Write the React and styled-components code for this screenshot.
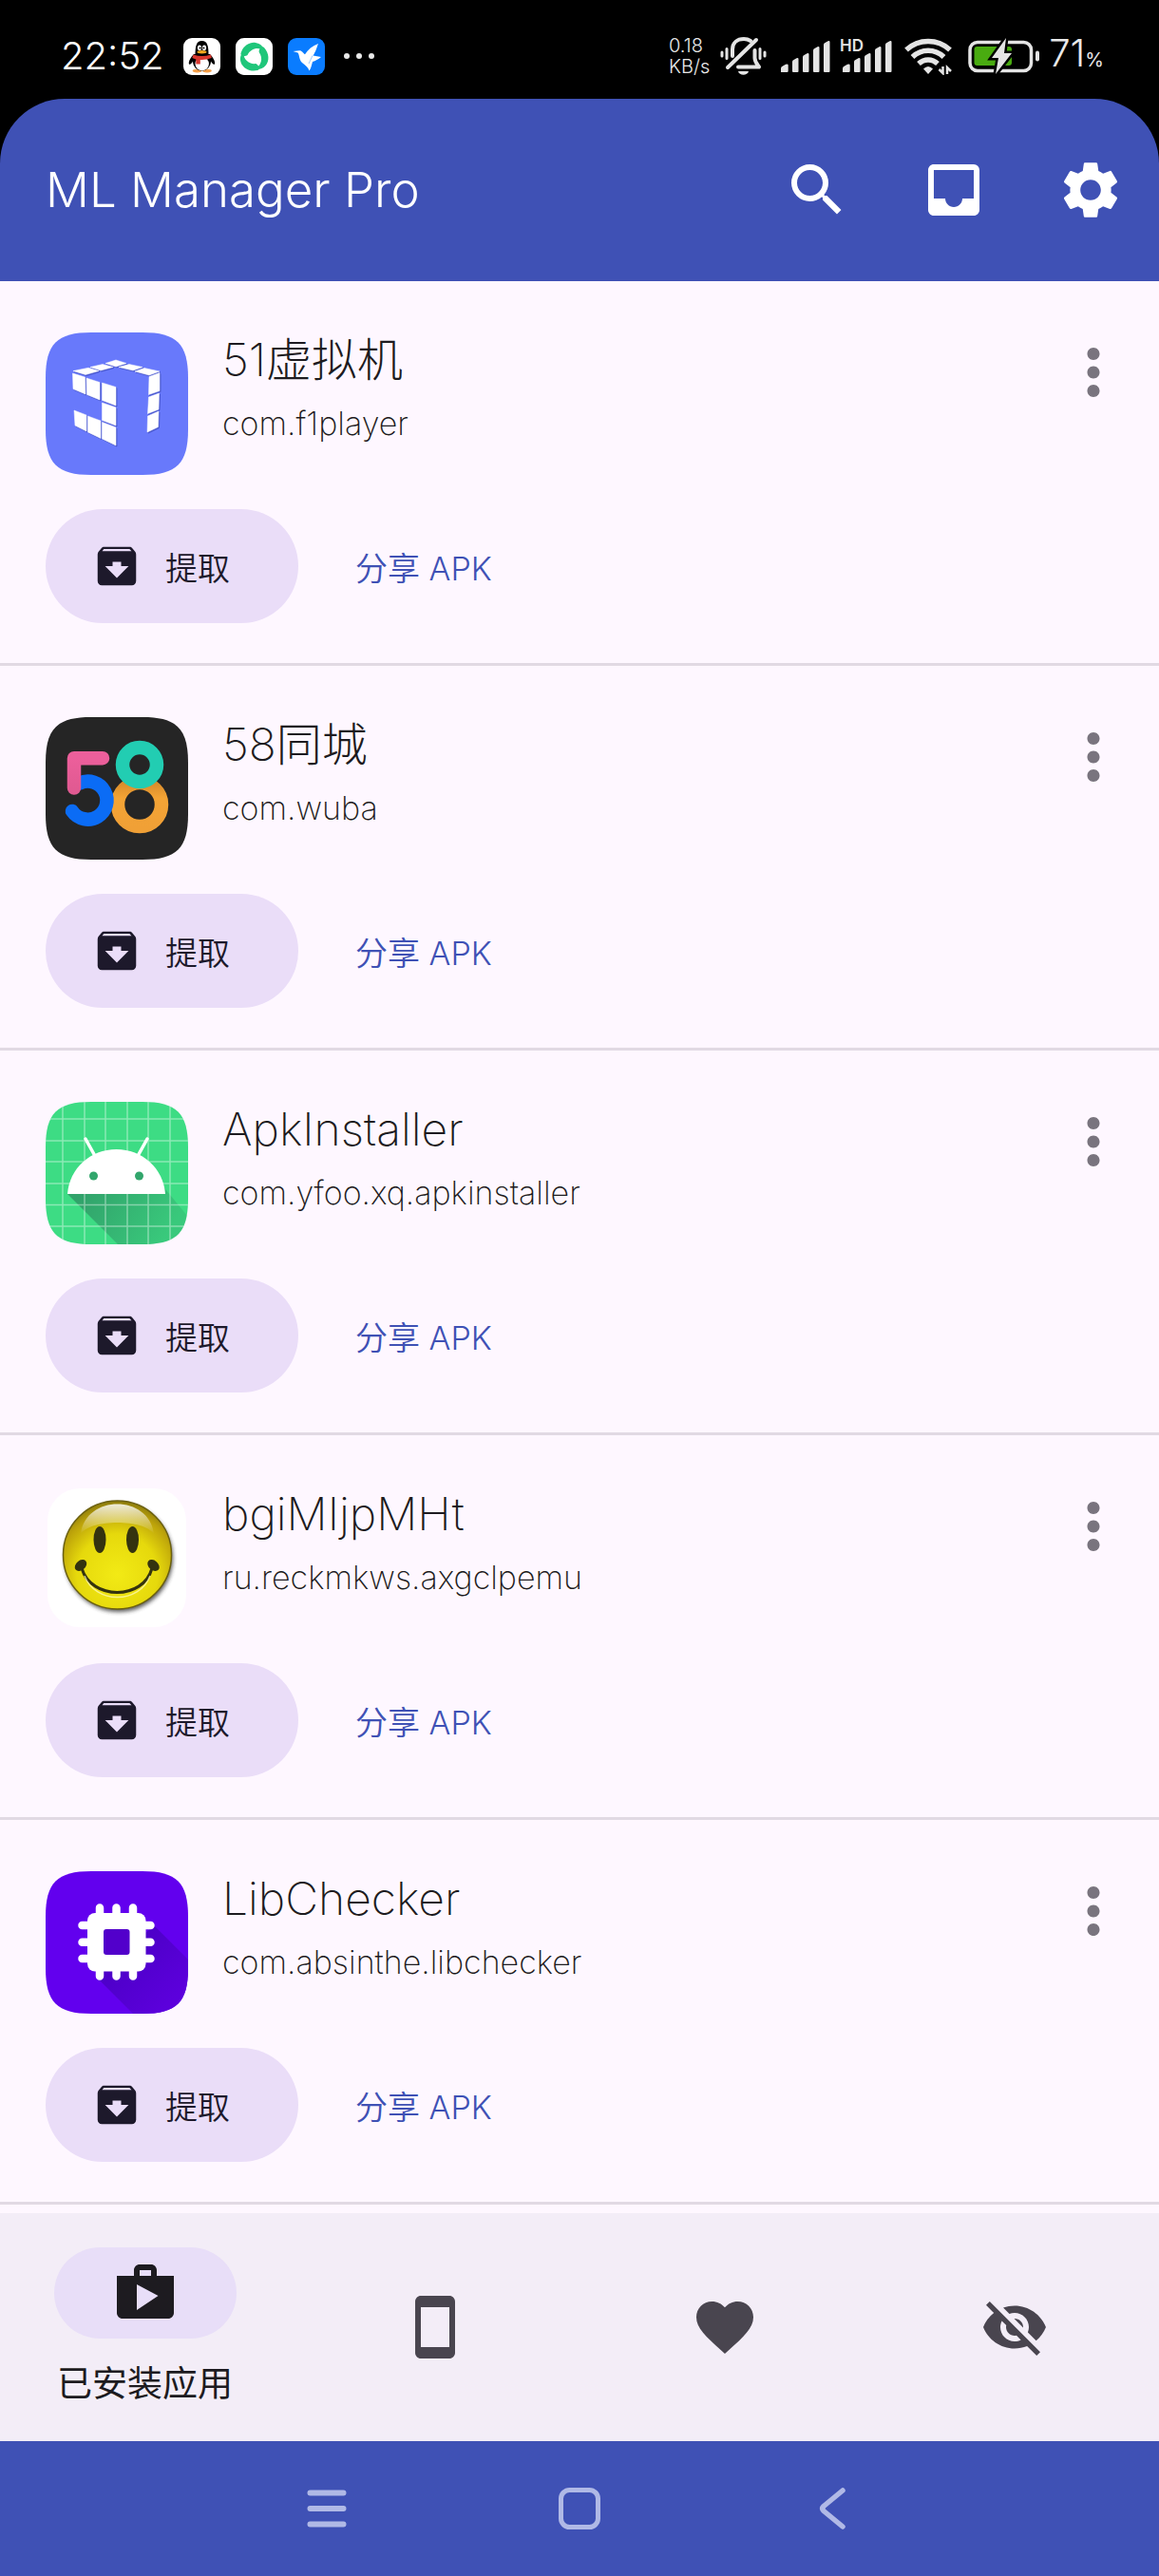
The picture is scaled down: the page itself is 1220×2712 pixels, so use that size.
import React from 'react';
import styled, { createGlobalStyle } from 'styled-components';
import {
    MdSearch, MdInbox, MdSettings, MdMoreVert, MdArchive,
    MdShop, MdStayCurrentPortrait, MdFavorite, MdVisibilityOff
} from 'react-icons/md';

const GlobalStyle = createGlobalStyle`
    * {
        box-sizing: border-box;
    }
    body {
        margin: 0;
        background: #000;
        font-family: "Inter", "Noto Sans CJK SC", sans-serif;
    }
    button {
        border: 0;
        padding: 0;
        margin: 0;
        background: none;
        font: inherit;
        color: inherit;
        cursor: pointer;
    }
    svg {
        display: block;
        flex: none;
    }
`

const Screen = styled.div`
    min-height: 100vh;
    display: flex;
    flex-direction: column;
`

/* ---------- status bar ---------- */

const StatusBar = styled.div`
    height: 104px;
    padding: 14px 58px 0 64px;
    display: flex;
    justify-content: space-between;
    align-items: center;
    color: #e8e8e8;
`

const StatusGroup = styled.div`
    display: flex;
    align-items: center;
    gap: ${props => props.$gap};
`

const Clock = styled.time`
    font-size: 40px;
    font-weight: 300;
    line-height: 48px;
    margin-right: 4px;
    color: #fff;
`

const NetSpeed = styled.div`
    display: flex;
    flex-direction: column;
    font-size: 20px;
    font-weight: 300;
    line-height: 22px;
`

const Battery = styled.div`
    font-size: 40px;
    font-weight: 300;
    line-height: 48px;
    small {
        font-size: 20px;
        font-weight: 400;
    }
`

/* ---------- app bar ---------- */

const AppBar = styled.header`
    height: 192px;
    padding: 0 36px 0 48px;
    display: flex;
    align-items: center;
    justify-content: space-between;
    border-radius: 68px 68px 0 0;
    background: #3f51b5;
    color: #fff;
    h1 {
        margin: 0;
        font-size: 51px;
        font-weight: 300;
        line-height: 60px;
    }
`

const Actions = styled.div`
    display: flex;
    gap: 72px;
`

/* ---------- list ---------- */

const AppList = styled.ul`
    flex: 1;
    margin: 0;
    padding: 0 0 9px;
    list-style: none;
    background: #fef7ff;
    color: #1d1b20;
`

const AppItem = styled.li`
    padding: 54px 30px 42px 48px;
    border-bottom: 3px solid #e1d9e3;
`

const ItemHead = styled.div`
    display: flex;
    align-items: flex-start;
    gap: 36px;
    margin-bottom: 36px;
`

const ItemText = styled.div`
    flex: 1;
    min-width: 0;
    font-weight: 200;
    h2 {
        margin: 0 0 12px;
        font-size: 48px;
        font-weight: 200;
        line-height: 58px;
    }
    p {
        margin: 0;
        font-size: 34px;
        line-height: 52px;
    }
`

const MoreButton = styled.button`
    height: 84px;
    color: #79747e;
`

const ItemActions = styled.div`
    display: flex;
    gap: 24px;
`

const ActionButton = styled.button`
    display: flex;
    align-items: center;
    gap: 24px;
    height: 120px;
    border-radius: 60px;
    padding: ${props => props.$filled ? '0 72px 0 48px' : '0 36px'};
    background: ${props => props.$filled ? '#eaddf8' : 'none'};
    color: ${props => props.$filled ? '#1d192b' : '#3f51b5'};
    font-size: 34px;
    font-weight: 350;
`

/* ---------- bottom bars ---------- */

const BottomNav = styled.nav`
    height: 240px;
    display: grid;
    grid-template-columns: repeat(4, 1fr);
    background: #f3edf7;
`

const NavItem = styled.button`
    display: flex;
    flex-direction: column;
    align-items: center;
    justify-content: center;
    gap: 24px;
    color: ${props => props.$active ? '#1d1b20' : '#49454f'};
    font-size: 37px;
    line-height: 48px;
`

const NavPill = styled.span`
    display: grid;
    place-items: center;
    width: 192px;
    height: 96px;
    border-radius: 48px;
    background: ${props => props.$active ? '#e8def8' : 'none'};
`

const SystemNav = styled.nav`
    height: 142px;
    display: flex;
    justify-content: center;
    background: #3f51b5;
`

const SystemButton = styled.button`
    width: 266px;
    display: grid;
    place-items: center;
`

/* ---------- status icons ---------- */

const PenguinBadge = () => (
    <svg width="39" height="39" viewBox="0 0 39 39">
        <rect width="39" height="39" rx="9" fill="#fff" />
        <ellipse cx="14.5" cy="34.6" rx="4.8" ry="1.8" fill="#f5a04a" />
        <ellipse cx="25" cy="34.6" rx="4.8" ry="1.8" fill="#f5a04a" />
        <path d="M11 17C8 20 5 25 6 27.500c1 1 3-1 4-3c0 5 4 10 9.500 10s9.500-5 9.500-10c1 2 3 4 4 3c1-2.500-2-7.500-5-10.500z" fill="#000" />
        <path d="M12.500 18c0-9 1-15 7-15s7 6 7 15z" fill="#000" />
        <ellipse cx="19.700" cy="27.200" rx="7.200" ry="7" fill="#fff" />
        <ellipse cx="17" cy="10.300" rx="2.100" ry="2.900" fill="#fff" />
        <ellipse cx="22" cy="10.300" rx="2.100" ry="2.900" fill="#fff" />
        <circle cx="17.700" cy="10.600" r="1" />
        <circle cx="21.400" cy="10.600" r="1" />
        <ellipse cx="19.500" cy="14.800" rx="5" ry="1.700" fill="#f3a71d" />
        <path d="M10.500 17.500q9 3 18.500 0l.8 3.500q-7 2.500-12 2v4.500h-4.500v-5l-4-1.500z" fill="#d9382f" />
    </svg>
)

const SwirlBadge = () => {
    const blade = 'M5.500 16C8 8 15 4 21 5C26 5.800 29 9 30.500 13.500C24 8.500 15.500 11 12.500 18C10 20 5 19.500 5.500 16z'
    return (
        <svg width="39" height="39" viewBox="0 0 39 39">
            <rect width="39" height="39" rx="9" fill="#fff" />
            <g fill="#1fc67a">
                <path d={blade} />
                <path d={blade} transform="rotate(120 19.500 20)" />
                <path d={blade} transform="rotate(240 19.500 20)" />
            </g>
        </svg>
    )
}

const BirdBadge = () => (
    <svg width="39" height="39" viewBox="0 0 39 39">
        <rect width="39" height="39" rx="9" fill="#0a7cff" />
        <path d="M5.500 14L12 13.300C15 13.200 16 16 18 17.300C21 12 26 8.500 32 6C30 11 29.500 14 26.500 18.500L35 20C32 22.500 29 24 26 25C25 28 24.500 32 22.500 34.500C21.500 31 18.500 28.500 15 26C11.500 22.500 12.500 18 10.500 15.500z" fill="#fff" />
        <path d="M26 18.500L22 27" stroke="#9ccbff" strokeWidth="1" />
    </svg>
)

const MoreDots = () => (
    <svg width="36" height="10" viewBox="0 0 36 10" fill="#e8e8e8">
        <circle cx="7" cy="5" r="3" />
        <circle cx="20" cy="5" r="3" />
        <circle cx="33" cy="5" r="3" />
    </svg>
)

const MutedBell = () => (
    <svg width="54" height="40" viewBox="0 0 54 40" fill="none" stroke="#e4e4e4" strokeWidth="4" strokeLinecap="round">
        <path d="M14 20V13C14 6 19 2 26 2c3 0 5 .7 7 2" />
        <path d="M37.500 14v8c0 4 2 6 4.500 9.500H20" strokeLinejoin="round" />
        <path d="M39 3L9 32" />
        <path d="M20 36h11c-1 5-10 5-11 0z" fill="#e4e4e4" stroke="none" />
        <path d="M3 16v4M8 12.500v10M43 12.500v10M48 16v4" strokeWidth="3" />
    </svg>
)

const Signal = ({ hd }) => (
    <svg width={hd ? 56 : 53} height="40" viewBox={hd ? '-2 0 56 40' : '0 0 53 40'} fill="#e4e4e4">
        <path d="M1 37v-4q0-2 2-2.500l3-1.700q2.700-1 2.700 1v6q0 1.200-1.200 1.200z" />
        {[[13, 22], [24, 17], [35, 10], [46, 4]].map(([x, y]) => (
            <path key={x} d={`M${x} 36V${y + 4}q0-1.500 1.500-2l3-1.700q2-.8 2 1V36q0 1-1 1h-4.500q-1 0-1-1z`} />
        ))}
        {hd && <text x="-2" y="15" fontSize="17" fontWeight="600" stroke="#000" strokeWidth="3" paintOrder="stroke">HD</text>}
    </svg>
)

const Wifi = () => (
    <svg width="57" height="40" viewBox="0 0 57 40" fill="none" stroke="#e4e4e4" strokeWidth="5.500">
        <path d="M4 13.500C17 1.500 37 1.500 50 13.500" />
        <path d="M10.500 21C20 12 34 12 43.500 21" />
        <path d="M17 28C23 22.500 31 22.500 37 28" />
        <path d="M27 39l-5-5.500q5-5 10 0z" fill="#e4e4e4" stroke="none" />
        <path d="M37.500 31h14v9h-14z" fill="#000" stroke="none" />
        <path d="M42.500 31v7l-4-4M47 39v-7l4 4" strokeWidth="2.500" />
    </svg>
)

const ChargingBattery = () => (
    <svg width="77" height="40" viewBox="0 0 77 40">
        <rect x="4" y="5.500" width="64.500" height="30" rx="8" fill="none" stroke="#e4e4e4" strokeWidth="3.500" />
        <rect x="73" y="14.500" width="4" height="11" rx="2" fill="#e4e4e4" />
        <rect x="8.500" y="10" width="39.500" height="20" rx="3" fill="#49ab10" />
        <path d="M42 1L27 22h7l-3 17L48 17h-8z" fill="#e4e4e4" stroke="#000" strokeWidth="5" paintOrder="stroke" />
    </svg>
)

/* ---------- app logos ---------- */

// rounded tile outline shared by all launcher icons
const TILE = 'M0 48C0 12 12 0 48 0h54c36 0 48 12 48 48v54c0 36-12 48-48 48H48C12 150 0 138 0 102z'

const cubeFaces = [
    '74,29 85,32.500 74,36 63,32.500', '47,36.500 60,33.500 71,36.500 58,40', '29,40.500 45,37.300 56,40.500 42,44.500',
    '77,36.500 88,33.500 102,36.500 92,40', '94,41 104,37.500 120,41 109,45',
    '28.500,43 41.500,47 42,65 29,59.500', '43,48 57,52.500 57,71 43.500,65.500', '59.500,53 74,57.500 74,77 59.500,71.500',
    '59.500,74 74,79 74,98 59.500,92.500', '30,82 43,87 43,104 31,98', '44.500,88 58,93 58,111.500 44.500,105',
    '59.500,94.500 74,100 74,119 59.500,112',
    '109,46.500 120,42.500 120,61.500 108.500,65.500', '108.500,68 119.500,64 119,81 107.500,85.500', '107.500,88 119,83 118.500,99.500 107,105'
]

const CubeLogo = () => (
    <svg width="150" height="150" viewBox="0 0 150 150">
        <path d={TILE} fill="#6879fb" />
        <g fill="#4b5ad0" stroke="#4b5ad0" transform="translate(1 1)">
            {cubeFaces.map(f => <polygon key={f} points={f} />)}
        </g>
        <g fill="#fff" stroke="#fff" strokeWidth=".5" strokeLinejoin="round">
            {cubeFaces.map(f => <polygon key={f} points={f} />)}
        </g>
    </svg>
)

const WubaLogo = () => (
    <svg width="150" height="150" viewBox="0 0 150 150">
        <defs>
            <linearGradient id="wubaOrange" x1="0" y1="0" x2="0" y2="1">
                <stop offset="0" stopColor="#d88c2b" />
                <stop offset=".35" stopColor="#f4a435" />
                <stop offset="1" stopColor="#f0a036" />
            </linearGradient>
            <linearGradient id="wubaPink" x1="0" y1="0" x2="0" y2="1">
                <stop offset="0" stopColor="#ec5f9b" />
                <stop offset="1" stopColor="#e15a92" />
            </linearGradient>
        </defs>
        <path d={TILE} fill="#252525" />
        <g fill="none" strokeWidth="14.500" strokeLinecap="round" strokeLinejoin="round">
            <circle cx="99" cy="92" r="23" stroke="url(#wubaOrange)" />
            <circle cx="99" cy="50" r="18" stroke="#22cdb2" />
            <path d="M36 69.500A20 20 0 1 1 28 99" stroke="#0b6cf5" />
            <path d="M60 43.200H30V74.500" stroke="url(#wubaPink)" />
        </g>
    </svg>
)

const AndroidLogo = () => (
    <svg width="150" height="150" viewBox="0 0 150 150">
        <defs>
            <clipPath id="androidTile"><path d={TILE} /></clipPath>
            <linearGradient id="androidShade" x1="40" y1="95" x2="120" y2="150" gradientUnits="userSpaceOnUse">
                <stop offset="0" stopColor="#2d8f62" stopOpacity=".75" />
                <stop offset="1" stopColor="#2d8f62" stopOpacity=".25" />
            </linearGradient>
        </defs>
        <g clipPath="url(#androidTile)">
            <rect width="150" height="150" fill="#3ddc84" />
            <path d="M23 97L76 150H150V121L108 70z" fill="url(#androidShade)" />
            <path d="M18 0v150M41 0v150M63 0v150M86 0v150M108 0v150M131 0v150M0 18h150M0 41h150M0 63h150M0 86h150M0 108.500h150M0 131h150" stroke="#fff" strokeOpacity=".4" strokeWidth="1.500" />
            <path d="M42 39l10 18M107 39L97 57" stroke="#fff" strokeWidth="3.500" strokeLinecap="round" />
            <path d="M23 97C25 70 47 50 74.500 50S124 70 126 97z" fill="#fff" />
            <circle cx="50.500" cy="78" r="4.500" fill="#32a66c" />
            <circle cx="98.500" cy="78" r="4.500" fill="#32a66c" />
        </g>
    </svg>
)

const SmileLogo = () => (
    <svg width="150" height="150" viewBox="0 0 150 150">
        <defs>
            <radialGradient id="smileFace" cx=".5" cy=".68" r=".68">
                <stop offset="0" stopColor="#f2ea15" />
                <stop offset=".55" stopColor="#e6d90c" />
                <stop offset=".85" stopColor="#bba10a" />
                <stop offset="1" stopColor="#8a7a0c" />
            </radialGradient>
            <linearGradient id="smileShine" x1="0" y1="0" x2="0" y2="1">
                <stop offset="0" stopColor="#fff" stopOpacity=".85" />
                <stop offset="1" stopColor="#fff" stopOpacity="0" />
            </linearGradient>
            <filter id="smileBlur" x="-20%" y="-20%" width="140%" height="140%">
                <feGaussianBlur stdDeviation="2" />
            </filter>
        </defs>
        <rect x="2" y="2" width="146" height="146" rx="34" fill="#fff" />
        <circle cx="77" cy="75" r="57" fill="#333" opacity=".8" filter="url(#smileBlur)" />
        <circle cx="75.500" cy="72" r="57" fill="url(#smileFace)" stroke="#6b6010" strokeWidth="1.500" />
        <path d="M37 50C42 8 109 8 114 50C104 34 47 34 37 50z" fill="url(#smileShine)" />
        <ellipse cx="57" cy="56" rx="6.500" ry="14" fill="#34330f" />
        <ellipse cx="91.500" cy="56" rx="6.500" ry="14" fill="#34330f" />
        <path d="M38 86C48 120 103 120 112 86" fill="none" stroke="#34330f" strokeWidth="3" />
        <path d="M41 94C52 124 99 124 110 94" fill="none" stroke="#fffbc0" strokeWidth="1.500" opacity=".7" />
        <ellipse cx="37" cy="83" rx="7" ry="5" transform="rotate(-40 37 83)" fill="#34330f" />
        <ellipse cx="113.500" cy="83" rx="7" ry="5" transform="rotate(40 113.500 83)" fill="#34330f" />
    </svg>
)

const ChipLogo = () => (
    <svg width="150" height="150" viewBox="0 0 150 150">
        <defs>
            <clipPath id="chipTile"><path d={TILE} /></clipPath>
            <linearGradient id="chipShade" x1="75" y1="75" x2="135" y2="135" gradientUnits="userSpaceOnUse">
                <stop offset="0" stopColor="#4a00c4" />
                <stop offset="1" stopColor="#5c00dc" />
            </linearGradient>
        </defs>
        <g clipPath="url(#chipTile)">
            <rect width="150" height="150" fill="#6200ee" />
            <path d="M54 112L92 150H150V93L114 57z" fill="url(#chipShade)" />
            <path d="M57 38.500v72M74.500 38.500v72M92 38.500v72M38.500 57h72M38.500 74.700h72M38.500 92h72" stroke="#fff" strokeWidth="8.500" strokeLinecap="round" />
            <rect x="44" y="44" width="61.500" height="61.500" rx="8" fill="#fff" />
            <rect x="61" y="61" width="27.500" height="27" rx="3" fill="#5200cb" />
        </g>
    </svg>
)

/* ---------- system nav icons ---------- */

const RecentsIcon = () => (
    <svg width="48" height="48" viewBox="0 0 48 48" stroke="#b0b9e6" strokeWidth="6" strokeLinecap="round">
        <path d="M6.500 7.500h35M6.500 24h35M6.500 40.500h35" />
    </svg>
)

const HomeIcon = () => (
    <svg width="48" height="48" viewBox="0 0 48 48" fill="none" stroke="#b0b9e6" strokeWidth="5">
        <rect x="4.500" y="4.500" width="39" height="39" rx="9" />
    </svg>
)

const BackIcon = () => (
    <svg width="48" height="48" viewBox="0 0 48 48" fill="none" stroke="#b0b9e6" strokeWidth="5.500" strokeLinecap="round" strokeLinejoin="round">
        <path d="M35 5L15 21.500Q12.500 24 15 26.500L35 43" />
    </svg>
)

const apps = [
    { name: '51虚拟机', pkg: 'com.f1player', Logo: CubeLogo },
    { name: '58同城', pkg: 'com.wuba', Logo: WubaLogo },
    { name: 'ApkInstaller', pkg: 'com.yfoo.xq.apkinstaller', Logo: AndroidLogo },
    { name: 'bgiMIjpMHt', pkg: 'ru.reckmkws.axgclpemu', Logo: SmileLogo },
    { name: 'LibChecker', pkg: 'com.absinthe.libchecker', Logo: ChipLogo },
]

export default function App() {
    return (
        <Screen>
            <GlobalStyle />
            <StatusBar>
                <StatusGroup $gap="16px">
                    <Clock>22:52</Clock>
                    <PenguinBadge />
                    <SwirlBadge />
                    <BirdBadge />
                    <MoreDots />
                </StatusGroup>
                <StatusGroup $gap="10px">
                    <NetSpeed>
                        <span>0.18</span>
                        <span>KB/s</span>
                    </NetSpeed>
                    <MutedBell />
                    <Signal />
                    <Signal hd />
                    <Wifi />
                    <ChargingBattery />
                    <Battery>71<small>%</small></Battery>
                </StatusGroup>
            </StatusBar>

            <AppBar>
                <h1>ML Manager Pro</h1>
                <Actions>
                    <button aria-label="Search"><MdSearch size={72} /></button>
                    <button aria-label="Inbox"><MdInbox size={72} /></button>
                    <button aria-label="Settings"><MdSettings size={72} /></button>
                </Actions>
            </AppBar>

            <AppList>
                {apps.map(({ name, pkg, Logo }) => (
                    <AppItem key={pkg}>
                        <ItemHead>
                            <Logo />
                            <ItemText>
                                <h2>{name}</h2>
                                <p>{pkg}</p>
                            </ItemText>
                            <MoreButton aria-label="More"><MdMoreVert size={78} /></MoreButton>
                        </ItemHead>
                        <ItemActions>
                            <ActionButton $filled><MdArchive size={54} />提取</ActionButton>
                            <ActionButton>分享 APK</ActionButton>
                        </ItemActions>
                    </AppItem>
                ))}
            </AppList>

            <BottomNav>
                <NavItem $active>
                    <NavPill $active><MdShop size={72} /></NavPill>
                    已安装应用
                </NavItem>
                <NavItem aria-label="System apps"><NavPill><MdStayCurrentPortrait size={72} /></NavPill></NavItem>
                <NavItem aria-label="Favorites"><NavPill><MdFavorite size={72} /></NavPill></NavItem>
                <NavItem aria-label="Hidden apps"><NavPill><MdVisibilityOff size={72} /></NavPill></NavItem>
            </BottomNav>

            <SystemNav>
                <SystemButton aria-label="Recents"><RecentsIcon /></SystemButton>
                <SystemButton aria-label="Home"><HomeIcon /></SystemButton>
                <SystemButton aria-label="Back"><BackIcon /></SystemButton>
            </SystemNav>
        </Screen>
    )
}
